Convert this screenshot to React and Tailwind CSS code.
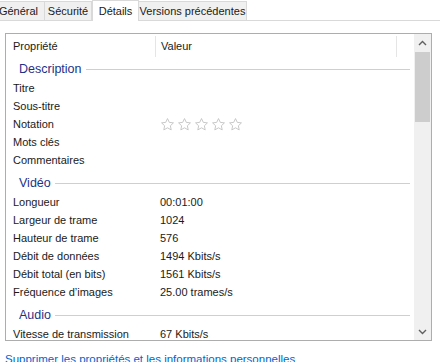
import React from 'react';

const FONT = { fontFamily: '"Liberation Sans", Arial, sans-serif' };

const TABS = [
  { label: 'Général', w: 'w-[52px]', first: true },
  { label: 'Sécurité', w: 'w-[47px]' },
  { label: 'Détails', w: 'w-[47px]', active: true },
  { label: 'Versions précédentes', w: 'w-[108px]' },
];

const GROUPS = [
  {
    title: 'Description',
    rows: [['Titre', ''], ['Sous-titre', ''], ['Notation', 'stars'], ['Mots clés', ''], ['Commentaires', '']],
  },
  {
    title: 'Vidéo',
    rows: [
      ['Longueur', '00:01:00'],
      ['Largeur de trame', '1024'],
      ['Hauteur de trame', '576'],
      ['Débit de données', '1494 Kbits/s'],
      ['Débit total (en bits)', '1561 Kbits/s'],
      ['Fréquence d’images', '25.00 trames/s'],
    ],
  },
  {
    title: 'Audio',
    rows: [['Vitesse de transmission', '67 Kbits/s']],
  },
];

function Star() {
  return (
    <svg width="15" height="15" viewBox="0 0 24 24" fill="none" stroke="#c4c4c4" strokeWidth="1.5" strokeLinejoin="round">
      <path d="M12 2.5l2.9 6.1 6.6.8-4.9 4.6 1.3 6.6L12 17.3l-5.9 3.3 1.3-6.6-4.9-4.6 6.6-.8z" />
    </svg>
  );
}

function Chevron({ up }) {
  return (
    <svg width="9" height="6" viewBox="0 0 9 6" fill="none" stroke="#606060" strokeWidth="1.4">
      <path d={up ? 'M1 5l3.5-3.5L8 5' : 'M1 1l3.5 3.5L8 1'} />
    </svg>
  );
}

export default function App() {
  return (
    <div className="w-[440px] h-[362px] overflow-hidden bg-white text-[11px] text-[#1a1a1a] whitespace-nowrap" style={FONT}>
      <div className="flex h-[21px] items-end border-b border-[#d9d9d9] bg-white">
        {TABS.map((t) => (
          <div key={t.label}
            className={`${t.w} flex shrink-0 items-center justify-center border-[#d9d9d9] ${t.first ? '-ml-[7px]' : ''} ${t.active ? 'h-[21px] -mb-px bg-white border-x border-t' : 'h-[19px] bg-[#f0f0f0] border-r border-t'}`}>
            {t.label}
          </div>
        ))}
      </div>

      <div className="ml-[5px] mt-[12px] flex h-[308px] w-[427px] border border-[#adadad]">
        <div className="relative flex-1 overflow-hidden">
          <div className="flex h-[25px] items-center">
            <div className="w-[149px] pl-[7px]">Propriété</div>
            <div className="h-[21px] border-l border-[#e5e5e5] pl-[5px] leading-[21px] w-[241px]">Valeur</div>
            <div className="h-[21px] border-l border-[#e5e5e5]" />
          </div>
          {GROUPS.map((g, gi) => (
            <div key={g.title} className={gi ? 'mt-[4px]' : ''}>
              <div className="flex h-[20px] items-center pl-[13px] pr-[4px]">
                <span className="text-[12.5px] text-[#1e3287]">{g.title}</span>
                <div className="ml-[4px] h-px flex-1 bg-[#c5d2de]" />
              </div>
              {g.rows.map(([k, v]) => (
                <div key={k} className="flex h-[18px] items-center">
                  <div className="w-[149px] pl-[7px]">{k}</div>
                  <div className="pl-[5px]">
                    {v === 'stars' ? (
                      <div className="flex gap-[2px]">
                        <Star /><Star /><Star /><Star /><Star />
                      </div>
                    ) : v}
                  </div>
                </div>
              ))}
            </div>
          ))}
        </div>
        <div className="flex w-[17px] flex-col bg-[#f0f0f0]">
          <div className="flex h-[17px] items-center justify-center"><Chevron up /></div>
          <div className="mx-auto mt-[1px] h-[70px] w-[15px] bg-[#cdcdcd]" />
          <div className="flex-1" />
          <div className="flex h-[17px] items-center justify-center"><Chevron /></div>
        </div>
      </div>

      <div className="ml-[5px] mt-[10px] text-[11.5px] text-[#0066cc]">Supprimer les propriétés et les informations personnelles</div>
    </div>
  );
}
